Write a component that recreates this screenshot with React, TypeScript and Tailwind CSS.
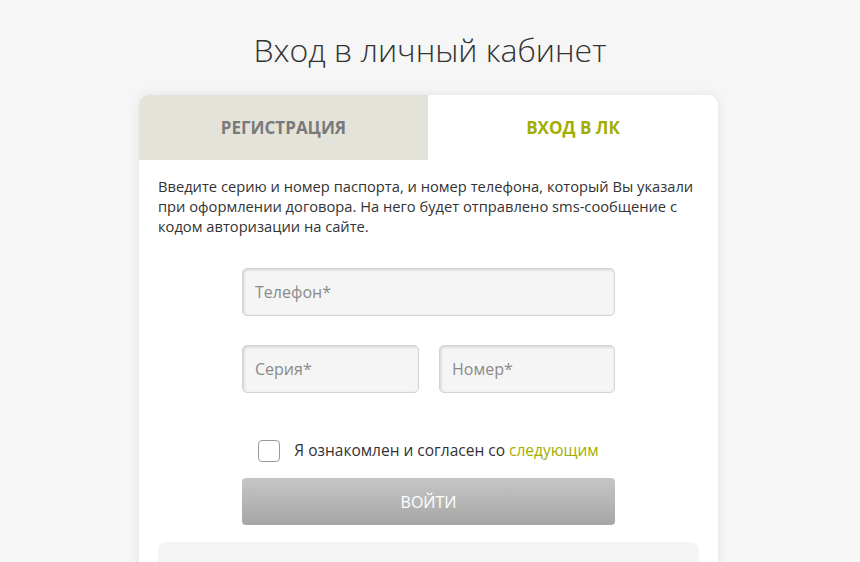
export default function App() {
  return (
    <div
      className="min-h-screen bg-[#f6f6f6] pt-[28px] text-[#333]"
      style={{ fontFamily: '"Open Sans", "Noto Sans", sans-serif' }}
    >
      <h1 className="text-center text-[32px] font-light leading-[44px] text-[#333]">
        Вход в личный кабинет
      </h1>

      <div className="ml-[139px] mt-[23px] w-[579px] rounded-t-[10px] bg-white shadow-[0_0_12px_rgba(0,0,0,0.08)]">
        <div className="flex h-[65px]">
          <button className="flex w-[289px] items-center justify-center rounded-tl-[10px] bg-[#e4e3da] text-[17px] font-bold uppercase text-[#7a7a7a]">
            Регистрация
          </button>
          <button className="flex flex-1 items-center justify-center rounded-tr-[10px] bg-white text-[17px] font-bold uppercase text-[#a3ad00]">
            Вход в ЛК
          </button>
        </div>

        <div className="px-[19px] pt-[16px] pb-[20px]">
          <p className="text-[14.7px] leading-[20px] text-[#333]">
            Введите серию и номер паспорта, и номер телефона, который Вы указали при оформлении
            договора. На него будет отправлено sms-сообщение с кодом авторизации на сайте.
          </p>

          <div className="mx-auto mt-[32px] flex w-[373px] flex-col">
            <input
              placeholder="Телефон*"
              className="h-[48px] w-full rounded-[5px] border border-[#d4d4d4] bg-[#f5f5f5] px-[12px] text-[16px] shadow-[inset_1px_1px_3px_rgba(0,0,0,0.15)] outline-none placeholder:text-[#8a8a8a]"
            />
            <div className="mt-[29px] flex gap-[20px]">
              <input
                placeholder="Серия*"
                className="h-[48px] w-[177px] rounded-[5px] border border-[#d4d4d4] bg-[#f5f5f5] px-[12px] text-[16px] shadow-[inset_1px_1px_3px_rgba(0,0,0,0.15)] outline-none placeholder:text-[#8a8a8a]"
              />
              <input
                placeholder="Номер*"
                className="h-[48px] w-[176px] rounded-[5px] border border-[#d4d4d4] bg-[#f5f5f5] px-[12px] text-[16px] shadow-[inset_1px_1px_3px_rgba(0,0,0,0.15)] outline-none placeholder:text-[#8a8a8a]"
              />
            </div>

            <label className="mt-[46px] flex items-center justify-center gap-[14px] text-[15.5px] text-[#333]">
              <span className="h-[22px] w-[22px] rounded-[4px] border border-[#9a9a9a] bg-white" />
              <span>
                Я ознакомлен и согласен со <span className="text-[#a3ad00]">следующим</span>
              </span>
            </label>

            <button className="mt-[16px] h-[47px] w-full rounded-[4px] bg-gradient-to-b from-[#c6c6c6] to-[#a6a6a6] text-[16px] uppercase text-white">
              Войти
            </button>
          </div>

          <div className="mt-[17px] h-[60px] rounded-[8px] bg-[#f5f5f5]" />
        </div>
      </div>
    </div>
  )
}
